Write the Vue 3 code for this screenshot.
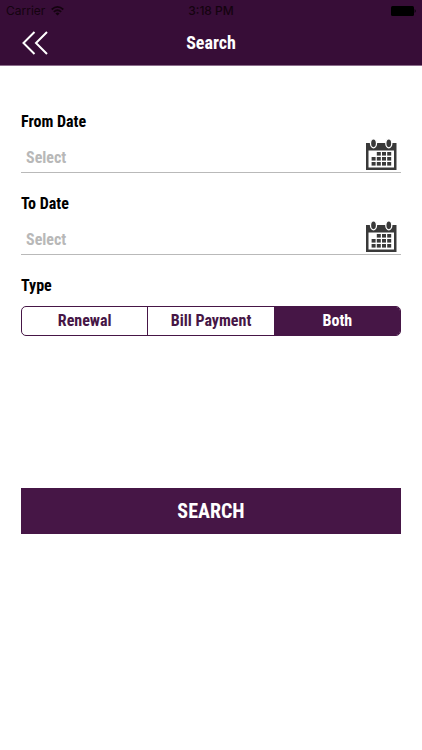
<script setup>
import { ref } from 'vue';

const form = ref({
  from: '',
  to: '',
  type: 'both'
});

const dateFields = [
  { key: 'from', label: 'From Date' },
  { key: 'to', label: 'To Date' }
];

const types = [
  { value: 'renewal', label: 'Renewal' },
  { value: 'bill', label: 'Bill Payment' },
  { value: 'both', label: 'Both' }
];

const dots = [
  [10.8, 13], [16, 13], [21.2, 13],
  [5.6, 18], [10.8, 18], [16, 18], [21.2, 18],
  [5.6, 23], [10.8, 23], [16, 23], [21.2, 23]
];

const focusField = (key) => {
  document.getElementById(`date-${key}`).focus();
};
</script>

<template>
  <div class="screen">
    <header class="header">
      <div class="status-bar">
        <span class="carrier">
          Carrier
          <svg width="13" height="10" viewBox="0 0 13 10" fill="none" stroke="currentColor" stroke-width="1.7">
            <path d="M0.7 3.5Q6.5 -1.6 12.3 3.5" />
            <path d="M2.8 5.9Q6.5 2.6 10.2 5.9" />
            <path d="M6.5 9.6L4.4 7.4Q6.5 5.8 8.6 7.4Z" fill="currentColor" stroke="none" />
          </svg>
        </span>
        <span class="time">3:18 PM</span>
        <span class="battery">
          <svg width="25" height="10" viewBox="0 0 25 10" fill="currentColor">
            <rect width="23" height="10" rx="1.5" />
            <path d="M23.7 3Q25.7 5 23.7 7Z" />
          </svg>
        </span>
      </div>
      <div class="nav-bar">
        <button type="button" class="btn-back" aria-label="Back">
          <svg width="26" height="24" viewBox="0 0 26 24" fill="none" stroke="#fff" stroke-width="2">
            <path d="M12.5 1L1.5 12L12.5 23M25 1L14 12L25 23" />
          </svg>
        </button>
        <h1>Search</h1>
      </div>
    </header>

    <form class="search-form" @submit.prevent>
      <div v-for="field in dateFields" :key="field.key" class="form-group">
        <label :for="`date-${field.key}`">{{ field.label }}</label>
        <div class="date-row">
          <input :id="`date-${field.key}`" v-model="form[field.key]" type="text" placeholder="Select" />
          <button type="button" class="btn-calendar" :aria-label="`Pick ${field.label}`" @click="focusField(field.key)">
            <svg width="31" height="32" viewBox="0 0 31 32">
              <path d="M0 4H30.5V31H0Z" fill="#393939" />
              <path d="M2.5 11.5H28V28.5H2.5Z" fill="#fff" />
              <g fill="#393939" stroke="#fff" stroke-width="1.3">
                <ellipse cx="7.5" cy="4.3" rx="3" ry="4.5" />
                <ellipse cx="22.8" cy="4.3" rx="3" ry="4.5" />
              </g>
              <rect v-for="(dot, i) in dots" :key="i" :x="dot[0]" :y="dot[1]" width="4" height="3.6" fill="#393939" />
            </svg>
          </button>
        </div>
      </div>

      <fieldset class="type-group">
        <legend>Type</legend>
        <div class="segments">
          <label v-for="t in types" :key="t.value" class="segment" :class="{ active: form.type === t.value }">
            <input v-model="form.type" type="radio" name="type" :value="t.value" />
            {{ t.label }}
          </label>
        </div>
      </fieldset>

      <button type="submit" class="btn-search">SEARCH</button>
    </form>
  </div>
</template>

<style>
body {
  background: #fff;
}
</style>

<style scoped>
.screen {
  font-family: "Roboto Condensed", "Liberation Sans Narrow", Roboto, sans-serif;
  font-weight: bold;
  font-size: 16px;
  line-height: 20px;
  color: #000;
}
button, input {
  font: inherit;
}
button {
  border: none; padding: 0; background: none; cursor: pointer;
}
svg { display: block; }

.header {
  background: #370d37;
  border-bottom: 1px solid #8b6d8b;
}
.status-bar {
  display: grid; grid-template-columns: 1fr auto 1fr; align-items: center;
  height: 22px; padding: 0 6px;
  font-family: Inter, sans-serif; font-weight: normal; font-size: 12px;
  color: #14030f;
}
.carrier { display: flex; align-items: center; gap: 6px; }
.time { font-weight: 500; }
.battery { justify-self: end; color: #000; }

.nav-bar {
  display: grid; grid-template-columns: 1fr auto 1fr; align-items: center;
  height: 41px; padding: 0 22px 2px;
}
.btn-back { justify-self: start; }
h1 { margin: 0; font-size: 18px; color: #fff; }

.search-form { padding: 46px 21px; }
.form-group { margin-bottom: 21px; display: flex; flex-direction: column; }
.date-row {
  display: flex; height: 40px;
  border-bottom: 1px solid #b9b9b9;
}
.date-row input {
  flex: 1; min-width: 0; padding: 12px 5px 0;
  border: none; outline: none; background: transparent;
}
.date-row input::placeholder { color: #b8b8b8; opacity: 1; }
.btn-calendar { padding: 6px 4px 0 0; }

.type-group { margin: 0; padding: 0; border: none; min-width: 0; }
legend { padding: 0; }
.segments {
  display: flex; height: 28px; margin-top: 10px;
  border: 1px solid #461646; border-radius: 5px; overflow: hidden;
}
.segment {
  flex: 1; display: flex; justify-content: center; align-items: center;
  position: relative; color: #461646; cursor: pointer;
}
.segment + .segment { border-left: 1px solid #461646; }
.segment.active { background: #461646; color: #fff; }
.segment input {
  position: absolute; inset: 0; margin: 0; opacity: 0; cursor: pointer;
}

.btn-search {
  width: 100%; height: 46px; margin-top: 152px;
  background: #461646; color: #fff; font-size: 20px;
}
</style>
